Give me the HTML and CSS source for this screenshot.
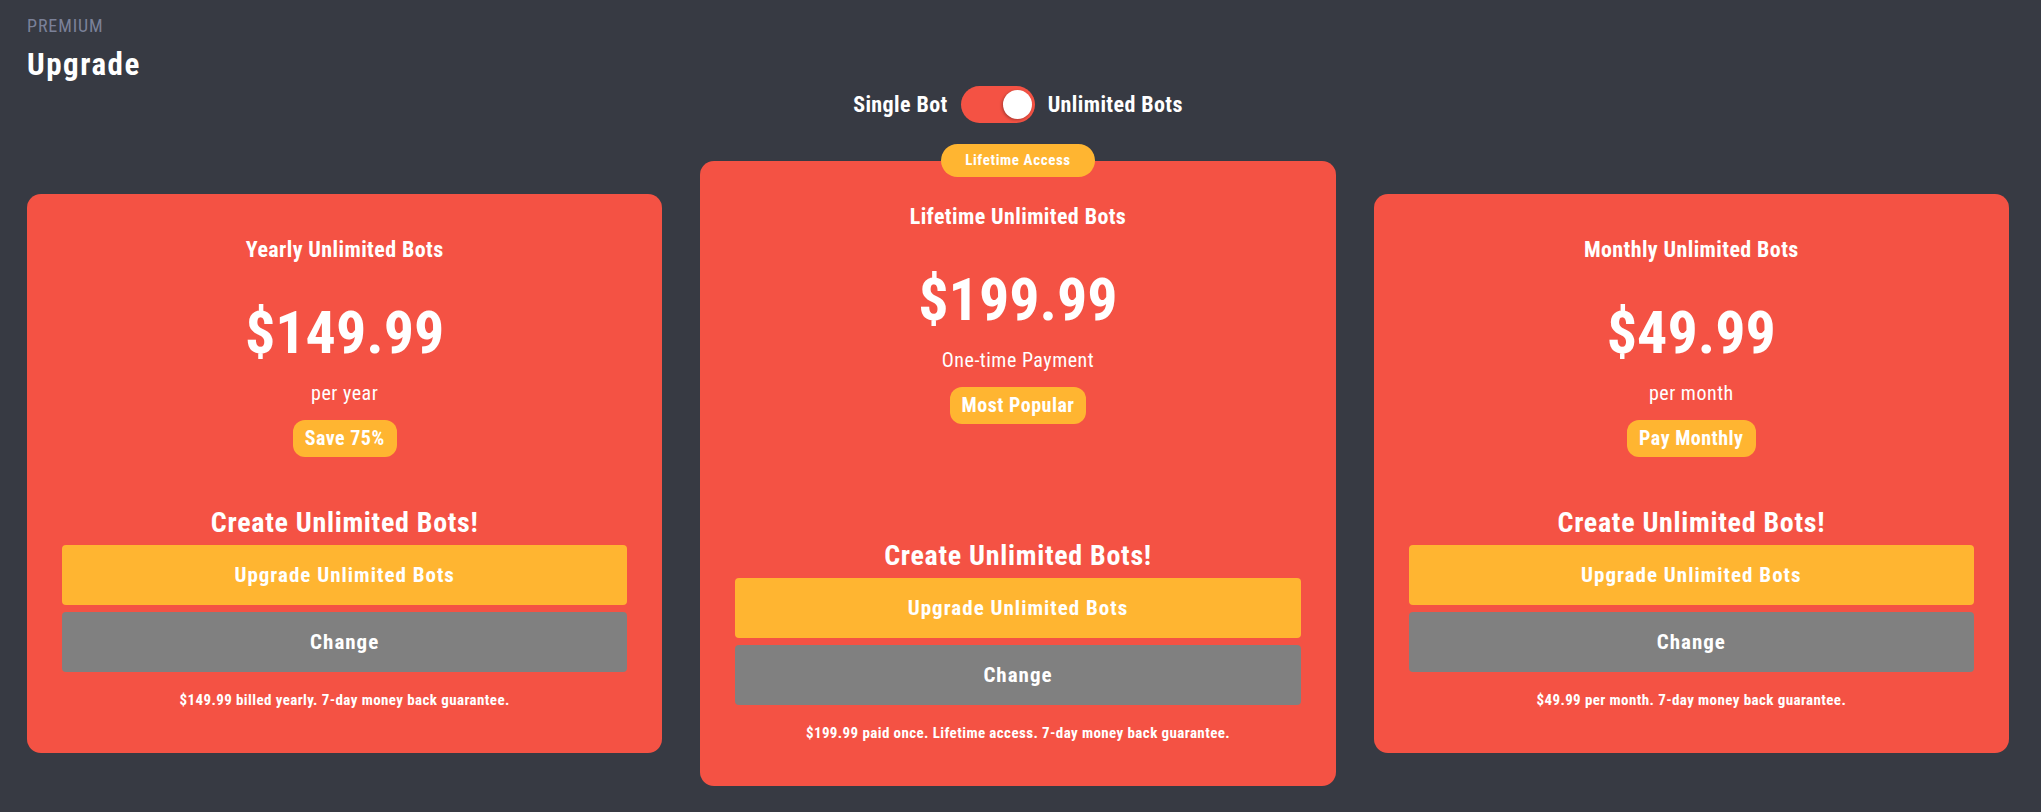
FILE: index.html
```html
<!DOCTYPE html>
<html lang="en">
<head>
    <meta charset="UTF-8">
    <title>Upgrade</title>
    <link rel="stylesheet" href="styles.css">
</head>
<body>
    <div class="page">
        <div class="eyebrow">PREMIUM</div>
        <h1 class="page-title">Upgrade</h1>

        <div class="plan-switch">
            <span>Single Bot</span>
            <div class="switch"><div class="knob"></div></div>
            <span>Unlimited Bots</span>
        </div>

        <div class="plans">
            <div class="plan">
                <div class="plan-top">
                    <div class="plan-name">Yearly Unlimited Bots</div>
                    <div class="plan-price">$149.99</div>
                    <div class="plan-period">per year</div>
                    <span class="pill">Save 75%</span>
                </div>
                <div class="plan-bottom">
                    <div class="plan-cta">Create Unlimited Bots!</div>
                    <button class="btn btn-upgrade">Upgrade Unlimited Bots</button>
                    <button class="btn btn-change">Change</button>
                    <div class="plan-note">$149.99 billed yearly. 7-day money back guarantee.</div>
                </div>
            </div>

            <div class="plan plan-featured">
                <span class="ribbon">Lifetime Access</span>
                <div class="plan-top">
                    <div class="plan-name">Lifetime Unlimited Bots</div>
                    <div class="plan-price">$199.99</div>
                    <div class="plan-period">One-time Payment</div>
                    <span class="pill">Most Popular</span>
                </div>
                <div class="plan-bottom">
                    <div class="plan-cta">Create Unlimited Bots!</div>
                    <button class="btn btn-upgrade">Upgrade Unlimited Bots</button>
                    <button class="btn btn-change">Change</button>
                    <div class="plan-note">$199.99 paid once. Lifetime access. 7-day money back guarantee.</div>
                </div>
            </div>

            <div class="plan">
                <div class="plan-top">
                    <div class="plan-name">Monthly Unlimited Bots</div>
                    <div class="plan-price">$49.99</div>
                    <div class="plan-period">per month</div>
                    <span class="pill">Pay Monthly</span>
                </div>
                <div class="plan-bottom">
                    <div class="plan-cta">Create Unlimited Bots!</div>
                    <button class="btn btn-upgrade">Upgrade Unlimited Bots</button>
                    <button class="btn btn-change">Change</button>
                    <div class="plan-note">$49.99 per month. 7-day money back guarantee.</div>
                </div>
            </div>
        </div>
    </div>
</body>
</html>
```

FILE: styles.css
```css
body {
    margin: 0;
    background: #373a43;
    font-family: Roboto, 'DejaVu Sans Condensed', sans-serif;
    font-stretch: 75%;
    letter-spacing: 0.4px;
    color: #fff;
}
.page {
    padding: 15px 32px 0 27px;
}
.eyebrow {
    font-size: 18px;
    line-height: 22px;
    letter-spacing: 0.9px;
    color: #7b8199;
}
.page-title {
    margin: 10px 0 0;
    font-size: 31px;
    line-height: 36px;
    letter-spacing: 1.5px;
    font-weight: bold;
}
.plan-switch {
    margin-top: 3px;
    display: flex;
    justify-content: center;
    align-items: center;
    gap: 13px;
    font-size: 22px;
    font-weight: bold;
}
.switch {
    width: 74px;
    height: 37px;
    border-radius: 19px;
    background: #f45244;
    display: flex;
    justify-content: flex-end;
    align-items: center;
    padding: 0 3px;
    box-sizing: border-box;
}
.knob {
    width: 29px;
    height: 29px;
    border-radius: 50%;
    background: #fff;
    box-shadow: -1px 1px 3px rgba(0, 0, 0, 0.3);
}
.plans {
    margin-top: 38px;
    display: grid;
    grid-template-columns: repeat(3, 1fr);
    gap: 38px;
    align-items: center;
}
.plan {
    position: relative;
    min-height: 559px;
    box-sizing: border-box;
    padding: 42px 35px 43px;
    background: #f45244;
    border-radius: 14px;
    display: flex;
    flex-direction: column;
    justify-content: space-between;
    text-align: center;
}
.plan-featured {
    min-height: 625px;
}
.ribbon {
    position: absolute;
    top: -17px;
    left: 50%;
    transform: translateX(-50%);
    width: 154px;
    height: 33px;
    line-height: 33px;
    border-radius: 17px;
    background: #ffb531;
    font-size: 15px;
    letter-spacing: 0.6px;
    font-weight: bold;
}
.plan-top {
    display: flex;
    flex-direction: column;
    align-items: center;
}
.plan-name {
    font-size: 22px;
    line-height: 28px;
    font-weight: bold;
}
.plan-price {
    margin-top: 34px;
    font-size: 60px;
    line-height: 70px;
    letter-spacing: 0;
    font-weight: bold;
}
.plan-period {
    margin-top: 13px;
    font-size: 20px;
    line-height: 24px;
    letter-spacing: 0.5px;
}
.pill {
    margin-top: 15px;
    height: 37px;
    line-height: 37px;
    padding: 0 12px;
    border-radius: 12px;
    background: #ffb531;
    font-size: 20px;
    letter-spacing: 0.5px;
    font-weight: bold;
}
.plan-cta {
    font-size: 28px;
    line-height: 34px;
    letter-spacing: 0.7px;
    font-weight: bold;
    margin-bottom: 5px;
}
.btn {
    display: block;
    width: 100%;
    height: 60px;
    border: 0;
    border-radius: 4px;
    font-family: inherit;
    font-stretch: inherit;
    font-size: 21px;
    letter-spacing: 1px;
    font-weight: bold;
    color: #fff;
}
.btn-upgrade {
    background: #ffb531;
}
.btn-change {
    margin-top: 7px;
    background: #808080;
}
.plan-note {
    margin-top: 18px;
    font-size: 15px;
    line-height: 20px;
    font-weight: bold;
}
```
